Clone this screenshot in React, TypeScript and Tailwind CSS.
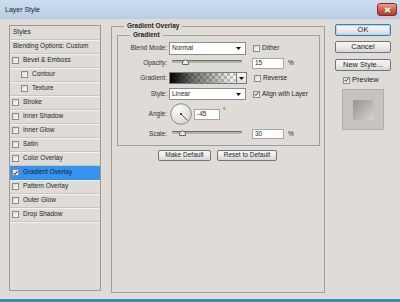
import React from 'react';

type CheckProps = { checked?: boolean; dark?: boolean };

function Check({ checked, dark }: CheckProps) {
  return (
    <span className="flex h-[7px] w-[7px] shrink-0 items-center justify-center border border-[#8e8a86] bg-gradient-to-br from-[#dcdad7] to-[#fbfbfb]">
      {checked && (
        <svg width="6" height="6" viewBox="0 0 6 6">
          <path d="M0.8 3.2 L2.3 4.8 L5.3 0.9" fill="none" stroke={dark ? '#111' : '#1d3f93'} strokeWidth="1.2" />
        </svg>
      )}
    </span>
  );
}

function Arrow() {
  return (
    <svg width="5" height="3" viewBox="0 0 5 3" className="shrink-0">
      <path d="M0 0 H5 L2.5 3 Z" fill="#111" />
    </svg>
  );
}

function Select({ value }: { value: string }) {
  return (
    <div className="flex h-full w-[77px] items-center justify-between border border-[#8f8b87] bg-white pl-[2px] pr-[4px]">
      <span>{value}</span>
      <Arrow />
    </div>
  );
}

function Slider({ thumb }: { thumb: string }) {
  return (
    <div className="relative ml-[5px] h-full w-[70px]">
      <div className="mt-[2px] h-[3px] rounded-[1px] border-t border-[#6e6a66] bg-[#b4b0ac]" />
      {/* thumb sits over the track */}
      <svg width="7" height="6" viewBox="0 0 7 6" className={`absolute top-[1px] ${thumb}`}>
        <path d="M3.5 0.5 L6.5 3 V5.5 H0.5 V3 Z" fill="#e9e8e6" stroke="#6b6864" strokeWidth="1" />
      </svg>
    </div>
  );
}

function Field({ value, w }: { value: string; w: string }) {
  return (
    <div className={`flex h-full items-center border border-[#a9a5a1] bg-white pl-[2px] ${w}`}>{value}</div>
  );
}

const Btn = ({ children, w, primary }: { children: React.ReactNode; w: string; primary?: boolean }) => (
  <div
    className={`flex items-center justify-center rounded-[2px] border bg-gradient-to-b from-[#f7f7f7] via-[#ebebeb] to-[#d6d6d6] ${w} ${
      primary ? 'border-[#3b7fb4] shadow-[inset_0_0_0_1px_#a9d8f4]' : 'border-[#747474]'
    }`}
  >
    {children}
  </div>
);

const effects: Array<{ label: string; indent?: boolean; checked?: boolean; active?: boolean }> = [
  { label: 'Bevel & Emboss' },
  { label: 'Contour', indent: true },
  { label: 'Texture', indent: true },
  { label: 'Stroke' },
  { label: 'Inner Shadow' },
  { label: 'Inner Glow' },
  { label: 'Satin' },
  { label: 'Color Overlay' },
  { label: 'Gradient Overlay', checked: true, active: true },
  { label: 'Pattern Overlay' },
  { label: 'Outer Glow' },
  { label: 'Drop Shadow' },
];

export default function App() {
  return (
    <div className="flex h-[302px] w-[400px] flex-col overflow-hidden border-b-[3px] border-[#3d8ab3] bg-[#dfdcd8] font-['Liberation_Sans',Arial,sans-serif] text-[6.5px] leading-none text-[#1e1e1e]">
      {/* Title bar */}
      <div className="flex h-[19px] shrink-0 items-center justify-between bg-gradient-to-b from-[#cddef0] to-[#b8cee6] pl-[5px] pr-[3px]">
        <span className="text-[7px] text-[#1b1b1b]">Layer Style</span>
        <div className="flex h-[13px] w-[20px] items-center justify-center rounded-[3px] border border-[#8a2a1c] bg-gradient-to-b from-[#e8a291] via-[#d0604a] to-[#b8361f]">
          <svg width="7" height="6" viewBox="0 0 7 6">
            <path d="M1 0.8 L6 5.2 M6 0.8 L1 5.2" stroke="#fff" strokeWidth="1.6" />
          </svg>
        </div>
      </div>

      <div className="flex items-start">
        {/* Styles list */}
        <div className="ml-[9px] mt-[6px] h-[266px] w-[92px] border border-[#9d9995]">
          <div className="flex h-[14px] items-center border-b border-[#c9c5c1] pl-[3px] shadow-[0_1px_0_#f4f2f0]">Styles</div>
          <div className="flex h-[14px] items-center border-b border-[#c9c5c1] pl-[3px] shadow-[0_1px_0_#f4f2f0]">Blending Options: Custom</div>
          {effects.map((e) => (
            <div
              key={e.label}
              className={`flex h-[14px] items-center gap-[4px] border-b shadow-[0_1px_0_#f4f2f0] ${
                e.indent ? 'pl-[11px]' : 'pl-[2px]'
              } ${e.active ? 'border-[#2f8ee9] bg-[#3394f2]' : 'border-[#c9c5c1]'}`}
            >
              <Check checked={e.checked} dark />
              <span>{e.label}</span>
            </div>
          ))}
        </div>

        {/* Gradient Overlay group */}
        <fieldset className="ml-[10px] mt-[3px] h-[271px] w-[214px] border border-[#a29e9a]">
          <legend className="ml-[12px] px-[3px] font-bold leading-[8px]">Gradient Overlay</legend>

          <fieldset className="ml-[5px] mt-[1px] h-[115px] w-[203px] border border-[#a29e9a]">
            <legend className="ml-[12px] px-[3px] font-bold leading-[8px]">Gradient</legend>

            <div className="mt-[3px] flex h-[13px] items-center">
              <span className="w-[49px] text-right text-[#333]">Blend Mode:</span>
              <div className="ml-[2px] h-full">
                <Select value="Normal" />
              </div>
              <div className="ml-[7px]"><Check /></div>
              <span className="ml-[2px]">Dither</span>
            </div>

            <div className="mt-[3px] flex h-[11px] items-center">
              <span className="w-[49px] text-right text-[#333]">Opacity:</span>
              <Slider thumb="left-[10px]" />
              <div className="ml-[10px] h-full">
                <Field value="15" w="w-[32px]" />
              </div>
              <span className="ml-[4px]">%</span>
            </div>

            <div className="mt-[3px] flex h-[12px] items-center">
              <span className="w-[49px] text-right text-[#333]">Gradient:</span>
              <div className="ml-[2px] flex h-full border border-[#7d7975]">
                <div className="h-full w-[66px] bg-[image:linear-gradient(to_right,#000,rgba(0,0,0,0.55)_35%,transparent),repeating-conic-gradient(#c9c9c9_0_25%,#fff_0_50%)] bg-[length:100%_100%,6px_6px]" />
                <div className="flex h-full w-[10px] items-center justify-center border-l border-[#7d7975] bg-gradient-to-b from-[#f8f8f8] to-[#dedede]">
                  <Arrow />
                </div>
              </div>
              <div className="ml-[7px]"><Check /></div>
              <span className="ml-[2px]">Reverse</span>
            </div>

            <div className="mt-[4px] flex h-[12px] items-center">
              <span className="w-[49px] text-right text-[#333]">Style:</span>
              <div className="ml-[2px] h-full">
                <Select value="Linear" />
              </div>
              <div className="ml-[7px]"><Check checked /></div>
              <span className="ml-[2px]">Align with Layer</span>
            </div>

            <div className="mt-[3px] flex h-[22px] items-center">
              <span className="w-[49px] text-right text-[#333]">Angle:</span>
              <svg width="22" height="22" viewBox="0 0 22 22" className="ml-[3px]">
                <defs>
                  <radialGradient id="dial" cx="0.35" cy="0.3" r="0.8">
                    <stop offset="0" stopColor="#fbfbfa" />
                    <stop offset="1" stopColor="#d7d4d0" />
                  </radialGradient>
                </defs>
                <circle cx="11" cy="11" r="10.3" fill="url(#dial)" stroke="#85817d" strokeWidth="0.9" />
                <line x1="11" y1="11" x2="17.5" y2="17.5" stroke="#3a3a3a" strokeWidth="0.8" />
                <circle cx="11" cy="11" r="1" fill="#111" />
              </svg>
              <div className="ml-[2px] h-[11px]">
                <Field value="-45" w="w-[26px]" />
              </div>
              <span className="ml-[3px] -mt-[5px]">°</span>
            </div>

            <div className="mt-[4px] flex h-[10px] items-center">
              <span className="w-[49px] text-right text-[#333]">Scale:</span>
              <Slider thumb="left-[7px]" />
              <div className="ml-[10px] h-full">
                <Field value="30" w="w-[32px]" />
              </div>
              <span className="ml-[4px]">%</span>
            </div>
          </fieldset>

          <div className="ml-[46px] mt-[4px] flex h-[11px] gap-[6px]">
            <Btn w="w-[53px]">Make Default</Btn>
            <Btn w="w-[60px]">Reset to Default</Btn>
          </div>
        </fieldset>

        {/* Buttons column */}
        <div className="ml-[10px] mt-[5px] flex w-[56px] flex-col text-[7.5px]">
          <div className="flex h-[12px]"><Btn w="w-full" primary>OK</Btn></div>
          <div className="mt-[5px] flex h-[12px]"><Btn w="w-full">Cancel</Btn></div>
          <div className="mt-[6px] flex h-[12px]"><Btn w="w-full">New Style...</Btn></div>
          <div className="ml-[8px] mt-[5px] flex h-[8px] items-center gap-[2px]">
            <Check checked />
            <span>Preview</span>
          </div>
          <div className="ml-[7px] mt-[5px] flex h-[41px] w-[42px] items-center justify-center border border-[#b3aeaa] bg-[#c8c3bf]">
            <div className="h-[20px] w-[20px] bg-gradient-to-br from-[#99948f] via-[#b6b1ad] to-[#d6d2ce]" />
          </div>
        </div>
      </div>
    </div>
  );
}
